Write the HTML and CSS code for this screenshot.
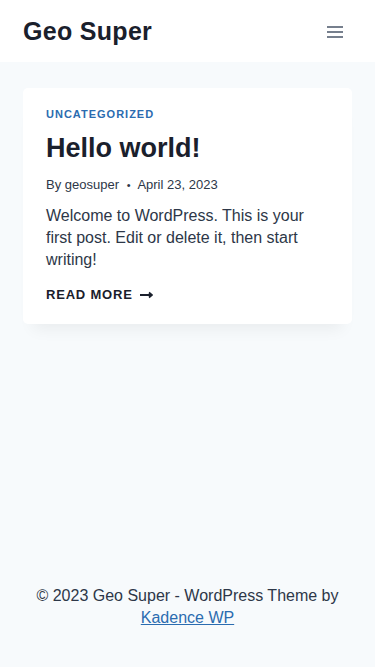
FILE: index.html
```html
<!DOCTYPE html>
<html lang="en">
<head>
    <meta charset="UTF-8">
    <title>Geo Super</title>
    <link rel="stylesheet" href="styles.css">
</head>
<body>

<header class="site-header">
    <div class="site-title">Geo Super</div>
    <button class="menu-toggle" aria-label="Menu">
        <svg width="16" height="12" viewBox="0 0 16 12">
            <path d="M0 1h16M0 6h16M0 11h16" stroke="#4a5568" stroke-width="1.4" fill="none"/>
        </svg>
    </button>
</header>

<main class="content">
    <article class="entry">
        <div class="entry-cat">Uncategorized</div>
        <h2 class="entry-title">Hello world!</h2>
        <div class="entry-meta">
            <span>By geosuper</span>
            <span class="dot">&bull;</span>
            <span>April 23, 2023</span>
        </div>
        <p class="entry-summary">Welcome to WordPress. This is your first post. Edit or delete it, then start writing!</p>
        <a class="more-link" href="#">Read More
            <svg class="arrow" width="13" height="8" viewBox="0 0 13 8">
                <path d="M0 4h11.5M9 1.5l3 2.5-3 2.5" stroke="#1a202c" stroke-width="1.8" fill="none"/>
            </svg>
        </a>
    </article>
</main>

<footer class="site-footer">
    &copy; 2023 Geo Super - WordPress Theme by <a href="#">Kadence WP</a>
</footer>

</body>
</html>
```

FILE: styles.css
```css
html, body {
    margin: 0;
    padding: 0;
}

body {
    font-family: "Liberation Sans", Arial, sans-serif;
    background: #f7fafc;
    color: #2d3748;
    min-height: 667px;
    display: flex;
    flex-direction: column;
}

.site-header {
    background: #ffffff;
    height: 62px;
    display: flex;
    align-items: center;
    justify-content: space-between;
    padding: 0 24px 0 23px;
}

.site-title {
    font-size: 25px;
    font-weight: bold;
    color: #1a202c;
    letter-spacing: 0.3px;
}

.menu-toggle {
    background: none;
    border: none;
    padding: 0;
    margin-right: 8px;
    margin-top: 2px;
    display: flex;
}

.content {
    padding: 26px 23px;
    flex: 1;
}

.entry {
    background: #ffffff;
    border-radius: 5px;
    padding: 20px 23px 21px 23px;
    box-shadow: 0 15px 15px -10px rgba(0, 0, 0, 0.06);
}

.entry-cat {
    font-size: 11px;
    font-weight: bold;
    text-transform: uppercase;
    letter-spacing: 1px;
    color: #2b6cb0;
}

.entry-title {
    font-size: 27px;
    font-weight: bold;
    color: #1a202c;
    margin: 11px 0 0 0;
    line-height: 1.3;
}

.entry-meta {
    font-size: 13px;
    color: #2d3748;
    margin-top: 11px;
}

.entry-meta .dot {
    margin: 0 4px;
    font-size: 11px;
}

.entry-summary {
    font-size: 16px;
    line-height: 22px;
    margin: 13px 0 0 0;
}

.more-link {
    display: inline-flex;
    align-items: center;
    gap: 7px;
    margin-top: 16px;
    font-size: 13px;
    font-weight: bold;
    text-transform: uppercase;
    letter-spacing: 0.8px;
    color: #1a202c;
    text-decoration: none;
}

.site-footer {
    text-align: center;
    font-size: 16px;
    line-height: 22px;
    color: #2d3748;
    padding: 0 20px 38px 20px;
}

.site-footer a {
    color: #2b6cb0;
}
```
